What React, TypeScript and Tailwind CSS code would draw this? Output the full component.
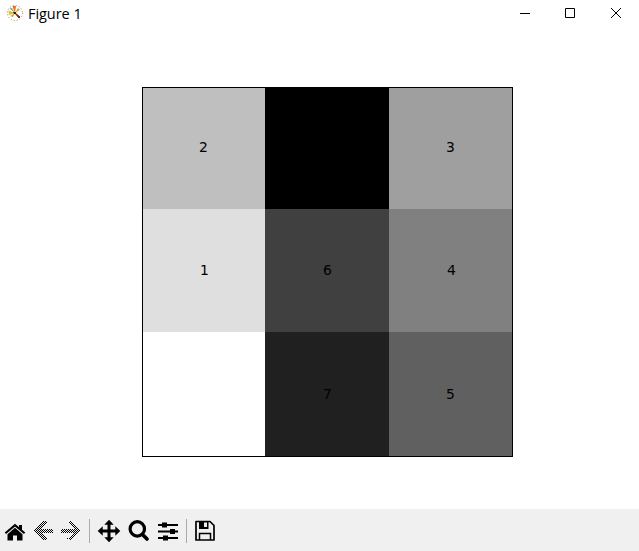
import type { ReactNode } from "react";

const cells = [
  { label: "2", style: "bg-[#bfbfbf] pr-px pb-[2px]" },
  { label: "", style: "bg-black" },
  { label: "3", style: "bg-[#9f9f9f] pb-[2px]" },
  { label: "1", style: "bg-[#dfdfdf] pl-px" },
  { label: "6", style: "bg-[#404040] pl-px" },
  { label: "4", style: "bg-[#808080] pl-[2px]" },
  { label: "", style: "bg-white" },
  { label: "7", style: "bg-[#202020] pl-px pt-px" },
  { label: "5", style: "bg-[#606060] pt-px" },
];

function Icon({ children, className = "" }: { children: ReactNode; className?: string }) {
  return (
    <svg viewBox="0 0 24 24" className={`h-6 w-6 shrink-0 ${className}`} fill="black">
      {children}
    </svg>
  );
}

function Arrow({ right = false }: { right?: boolean }) {
  const id = right ? "forward-dots" : "back-dots";
  return (
    <Icon>
      <defs>
        <pattern id={id} width="2" height="2" patternUnits="userSpaceOnUse">
          <rect width="1" height="1" />
          <rect x="1" y="1" width="1" height="1" />
        </pattern>
      </defs>
      <path
        fill={`url(#${id})`}
        shapeRendering="crispEdges"
        d={
          right
            ? "M11 2H13L22 10.5V12.5L13 21H11L9.5 19.5L16 13.5H3V9.5H16L9.5 3.5Z"
            : "M12 2H10L1 10.5V12.5L10 21H12L14 19L8.5 13.5H20V9.5H8.5L14 4Z"
        }
      />
    </Icon>
  );
}

function TitleBar() {
  return (
    <header className="flex h-7 shrink-0 items-center pb-[2px] pl-[6px] text-black">
      <svg viewBox="0 0 18 18" className="h-[18px] w-[18px]" fill="none">
        <circle cx="9" cy="9" r="7.5" stroke="#777" strokeWidth=".9" strokeDasharray="1 2" />
        <path d="M9 9 2.5 6.5 3 11Z" fill="#d4c629" />
        <path d="M9 9 3.5 4.5 6 4Z" fill="#83ad55" />
        <path d="M9 9 6.5 2 10 2Z" fill="#e76a25" />
        <path d="M9 9 12 4 14 6Z" fill="#e6a22b" />
        <path d="M9 9 4 12 7 13Z" fill="#f19b29" />
        <path d="m8 8 6 5-1 1Z" fill="#7b2412" stroke="#7b2412" />
        <path d="M7 8h3v2H8Z" fill="#292719" />
      </svg>
      <h1 className="ml-1 flex-1 pt-px font-['Open_Sans',sans-serif] text-[14.5px] leading-5 tracking-[-0.05px]">Figure 1</h1>
      <div className="mr-[17px] flex items-center">
        <svg viewBox="0 0 12 12" className="mr-[35px] h-3 w-3" stroke="black"><path d="M2 6.5h10" /></svg>
        <svg viewBox="0 0 12 12" className="mr-[33px] h-3 w-3" stroke="black" fill="none"><path d="M.5 1.5h9v9h-9z" /></svg>
        <svg viewBox="0 0 12 12" className="h-3 w-3" stroke="black"><path d="m1 1 10 10M11 1 1 11" /></svg>
      </div>
    </header>
  );
}

function Toolbar() {
  return (
    <footer className="flex h-[42px] shrink-0 items-center bg-[#f0f0f0] pb-px pl-[3px] pt-0.5">
      <Icon>
        <path d="M12 8.8 19.5 15.2V21.5H14V16.5H10V21.5H4.5V15.2Z" />
        <path d="M2.4 14.2 12 6.2 21.6 14.2" fill="none" stroke="black" strokeWidth="2.1" />
        <path d="M16 6h3v6l-3-2.5Z" />
      </Icon>
      <div className="ml-[6px]"><Arrow /></div>
      <div className="ml-px"><Arrow right /></div>
      <div className="ml-[7px] h-6 w-px bg-[#aaa]" />
      <Icon className="ml-[7px]">
        <path d="M10.5 4h3v16h-3zM4 10.5h16v3H4z" />
        <path d="m12 .7 4.7 5H7.3zM12 23.3l4.7-5H7.3zM.7 12l5-4.7v9.4zM23.3 12l-5-4.7v9.4z" />
      </Icon>
      <Icon className="ml-[6px]">
        <circle cx="10.3" cy="9.9" r="7.2" fill="none" stroke="black" strokeWidth="3.2" />
        <path d="m15.5 15.5 4.5 4.5" fill="none" stroke="black" strokeWidth="3.7" strokeLinecap="round" />
      </Icon>
      <Icon className="ml-[5px]">
        <path d="M2 5h20v2H2zM2 11.5h20v2H2zM2 18h20v2H2z" />
        <path d="M6 3.5h5v5H6zM14 10h5v5h-5zM7 16.5h5v5H7z" />
      </Icon>
      <div className="ml-[6px] h-6 w-px bg-[#aaa]" />
      <Icon className="ml-[6px]">
        <path d="M3 2.5H17L21 6.5V21H3Z" fill="none" stroke="black" strokeWidth="1.7" strokeLinejoin="round" />
        <path d="M6 2.5h9.5v7.5H6z" />
        <path fill="#f0f0f0" d="M11 3.5h3V8h-3z" />
        <path d="M6.5 21v-6.5h11V21" fill="none" stroke="black" strokeWidth="1.5" />
      </Icon>
    </footer>
  );
}

export default function App() {
  return (
    <div className="flex h-[551px] w-[639px] flex-col overflow-hidden bg-white">
      <TitleBar />
      <main className="flex-1 pl-[142px] pt-[59px]">
        <div className="grid h-[370px] w-[371px] grid-cols-[122px_124px_123px] grid-rows-[121px_123px_124px] border border-black">
          {cells.map(({ label, style }, index) => (
            <div key={index} className={`flex items-center justify-center font-['DejaVu_Sans',sans-serif] text-[13.9px] leading-none text-black ${style}`}>
              {label}
            </div>
          ))}
        </div>
      </main>
      <Toolbar />
    </div>
  );
}
